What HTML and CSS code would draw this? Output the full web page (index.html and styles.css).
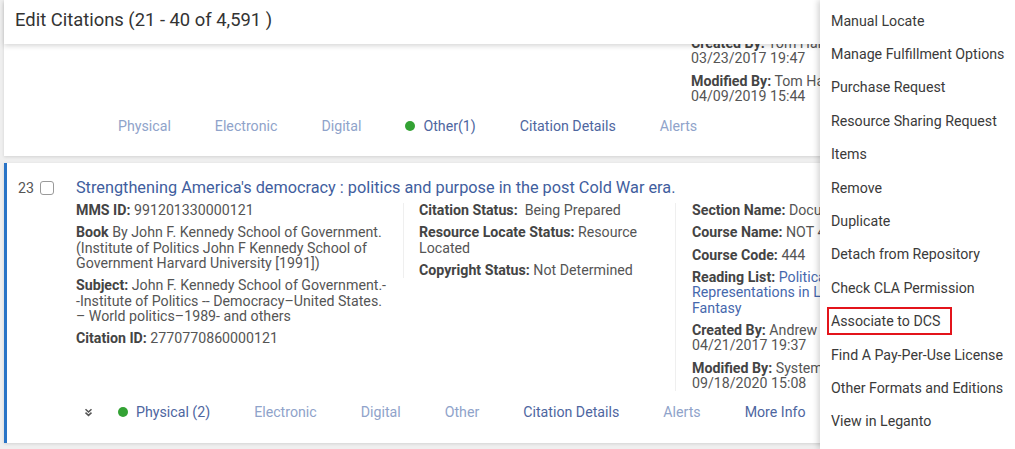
FILE: index.html
```html
<!DOCTYPE html>
<html>
<head>
  <title>Edit Citations</title>
  <link rel="stylesheet" href="styles.css">
</head>
<body>
  <div class="page">

    <div class="page-header">
      <h1>Edit Citations (21 - 40 of 4,591 )</h1>
    </div>

    <div class="list">
      <!-- wiersz 22, przewinięty pod nagłówek -->
      <div class="citation clipped">
        <div class="fields plain">
          <div class="col"></div>
          <div class="col"></div>
          <div class="col">
            <p><b>Created By:</b> Tom Harrison<br>03/23/2017 19:47</p>
            <p><b>Modified By:</b> Tom Harrison<br>04/09/2019 15:44</p>
          </div>
        </div>
        <div class="tabs">
          <span class="toggle hidden"></span>
          <div class="tab-list">
            <span class="tab">Physical</span>
            <span class="tab">Electronic</span>
            <span class="tab">Digital</span>
            <span class="tab active"><span class="dot"></span>Other(1)</span>
            <span class="tab active">Citation Details</span>
            <span class="tab">Alerts</span>
          </div>
        </div>
      </div>

      <div class="citation selected">
        <div class="title-row">
          <span class="num">23</span>
          <span class="check"></span>
          <a class="title">Strengthening America's democracy : politics and purpose in the post Cold War era.</a>
        </div>
        <div class="fields">
          <div class="col">
            <p><b>MMS ID:</b> 991201330000121</p>
            <p><b>Book</b> By John F. Kennedy School of Government. (Institute of Politics John F Kennedy School of Government Harvard University [1991])</p>
            <p><b>Subject:</b> John F. Kennedy School of Government.-<br>-Institute of Politics -- Democracy–United States.<br>– World politics–1989- and others</p>
            <p><b>Citation ID:</b> 2770770860000121</p>
          </div>
          <div class="col">
            <p><b>Citation Status:</b>&nbsp; Being Prepared</p>
            <p><b>Resource Locate Status:</b> Resource Located</p>
            <p><b>Copyright Status:</b> Not Determined</p>
          </div>
          <div class="col">
            <p><b>Section Name:</b> Documents</p>
            <p><b>Course Name:</b> NOT 444 Course</p>
            <p><b>Course Code:</b> 444</p>
            <p><b>Reading List:</b> <a class="link">Political Representations in Literature and Fantasy</a></p>
            <p><b>Created By:</b> Andrew Harris<br>04/21/2017 19:37</p>
            <p><b>Modified By:</b> System<br>09/18/2020 15:08</p>
          </div>
        </div>
        <div class="tabs">
          <span class="toggle">
            <svg width="9" height="9" viewBox="0 0 9 9"><path d="M1.5 1.2L4.5 4L7.5 1.2M1.5 4.6L4.5 7.4L7.5 4.6" fill="none" stroke="#555" stroke-width="1.5"/></svg>
          </span>
          <div class="tab-list">
            <span class="tab active"><span class="dot"></span>Physical (2)</span>
            <span class="tab">Electronic</span>
            <span class="tab">Digital</span>
            <span class="tab">Other</span>
            <span class="tab active">Citation Details</span>
            <span class="tab">Alerts</span>
            <span class="tab active">More Info</span>
          </div>
        </div>
      </div>
    </div>

    <!-- menu akcji wiersza -->
    <ul class="actions">
      <li>Manual Locate</li>
      <li>Manage Fulfillment Options</li>
      <li>Purchase Request</li>
      <li>Resource Sharing Request</li>
      <li>Items</li>
      <li>Remove</li>
      <li>Duplicate</li>
      <li>Detach from Repository</li>
      <li>Check CLA Permission</li>
      <li><span class="marked">Associate to DCS</span></li>
      <li>Find A Pay-Per-Use License</li>
      <li>Other Formats and Editions</li>
      <li>View in Leganto</li>
      <li>Send Citation by Email</li>
    </ul>

  </div>
</body>
</html>
```

FILE: styles.css
```css
* {
  box-sizing: border-box;
}

body {
  margin: 0;
  font-family: Roboto, "Liberation Sans", Arial, sans-serif;
  font-size: 14.2px;
  color: #555;
  background-color: #efefef;
  overflow: hidden;
}

.page {
  position: relative;
  height: 449px;
  padding-left: 4px;
  overflow: hidden;
}

/* Nagłówek przyklejony u góry */
.page-header {
  position: absolute;
  top: 0;
  left: 4px;
  right: 0;
  height: 44px;
  padding: 9px 11px 0;
  background-color: #fff;
  box-shadow: 0 2px 5px rgba(0, 0, 0, 0.16);
  z-index: 2;
}

h1 {
  margin: 0;
  font-size: 18.4px;
  line-height: 22px;
  font-weight: 400;
  color: #333;
}

/* Karty cytowań */
.citation {
  background-color: #fff;
  border-left: 3px solid transparent;
  padding: 15px 0 15px 11px;
  margin-bottom: 7px;
  box-shadow: 0 1px 3px rgba(0, 0, 0, 0.12);
}

.citation.clipped {
  padding-top: 36px;
  padding-bottom: 14px;
}

.citation.selected {
  border-left-color: #2a74c6;
}

.title-row {
  display: flex;
  align-items: center;
  height: 20px;
}

.num {
  color: #555;
}

.check {
  width: 14px;
  height: 14px;
  margin-left: 6px;
  border: 1px solid #9a9a9a;
  border-radius: 3px;
  background-color: #fff;
}

.title {
  margin-left: 22px;
  font-size: 16.3px;
  line-height: 20px;
  color: #3f5e9e;
}

.fields {
  display: grid;
  grid-template-columns: 327px 272px 250px;
  align-items: start;
  margin: 5px 0 0 58px;
  line-height: 15.3px;
}

.fields.plain {
  margin-top: 0;
}

.col {
  padding-right: 14px;
}

.col + .col {
  border-left: 1px solid #efefef;
  padding-left: 15px;
}

.col + .col + .col {
  padding-left: 16px;
}

.fields.plain .col {
  border-left: none;
}

.col p {
  margin: 0 0 7px;
}

.col p:last-child {
  margin-bottom: 0;
}

.col b {
  color: #444;
  font-weight: 700;
}

.link {
  color: #4668ad;
}

/* Zakładki pod kartą */
.tabs {
  display: flex;
  align-items: center;
  height: 32px;
  margin: 5px 0 0 62px;
}

.clipped .tabs {
  margin-top: 6px;
}

.toggle {
  display: flex;
  justify-content: center;
  width: 16px;
}

.toggle.hidden {
  visibility: hidden;
}

.tab-list {
  display: flex;
  gap: 44px;
  margin-left: 22px;
}

.tab {
  display: flex;
  align-items: center;
  color: #8fa3ca;
  white-space: nowrap;
}

.tab.active {
  color: #4e669f;
}

.dot {
  width: 10px;
  height: 10px;
  margin-right: 8px;
  border-radius: 50%;
  background-color: #33a234;
}

/* Menu akcji */
.actions {
  position: absolute;
  top: 0;
  right: 0;
  bottom: 0;
  width: 195px;
  margin: 0;
  padding: 4px 0 0;
  list-style: none;
  background-color: #fff;
  box-shadow: -2px 0 6px rgba(0, 0, 0, 0.18);
  z-index: 3;
  overflow: hidden;
}

.actions li {
  display: flex;
  align-items: center;
  height: 33.4px;
  padding-left: 11px;
  color: #3a3a3a;
  white-space: nowrap;
}

.marked {
  margin-left: -4px;
  padding: 4px 10px 4px 2px;
  border: 2px solid #e3141b;
}
```
